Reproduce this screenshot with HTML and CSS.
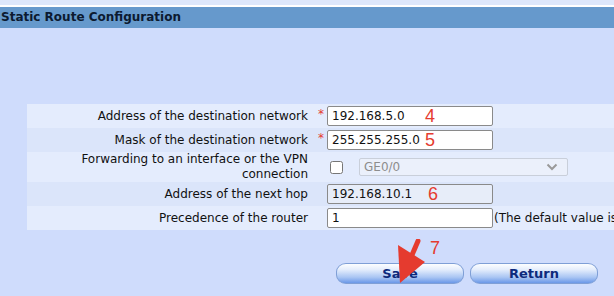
FILE: index.html
```html
<!DOCTYPE html>
<html>
<head>
<meta charset="utf-8">
<link rel="stylesheet" href="styles.css">
</head>
<body>
<div class="top-stripe"></div>
<div class="header">Static Route Configuration</div>
<div class="content">
  <div class="form">
    <div class="row light">
      <div class="label">Address of the destination network</div>
      <div class="star">*</div>
      <div class="value"><input class="field" type="text" value="192.168.5.0"><span class="note note-4">4</span></div>
    </div>
    <div class="row dark">
      <div class="label">Mask of the destination network</div>
      <div class="star">*</div>
      <div class="value"><input class="field" type="text" value="255.255.255.0"><span class="note note-5">5</span></div>
    </div>
    <div class="row light tall">
      <div class="label">Forwarding to an interface or the VPN connection</div>
      <div class="star"></div>
      <div class="value">
        <input class="check" type="checkbox">
        <div class="select-wrap">
          <select class="select" disabled><option>GE0/0</option></select>
          <svg class="chev" width="12" height="8" viewBox="0 0 12 8"><path d="M1.5 1.5 L6 6 L10.5 1.5" fill="none" stroke="#9a9a9a" stroke-width="2"/></svg>
        </div>
      </div>
    </div>
    <div class="row dark">
      <div class="label">Address of the next hop</div>
      <div class="star"></div>
      <div class="value"><input class="field readonly" type="text" value="192.168.10.1" readonly><span class="note note-6">6</span></div>
    </div>
    <div class="row light">
      <div class="label">Precedence of the router</div>
      <div class="star"></div>
      <div class="value"><input class="field" type="text" value="1"><span class="hint">(The default value is 60)</span></div>
    </div>
  </div>
  <div class="buttons">
    <button class="btn">Save</button>
    <button class="btn">Return</button>
    <span class="note note-7">7</span>
    <svg class="arrow" width="40" height="50" viewBox="0 0 40 50"><path d="M28 2 L22 16" stroke="#e53b2f" stroke-width="5" stroke-linecap="round" fill="none"/><path d="M8 6 L35 23 L10 44 Z" fill="#e53b2f"/></svg>
  </div>
</div>
</body>
</html>
```
FILE: styles.css
```css
html, body {
  margin: 0;
  padding: 0;
}
body {
  width: 614px;
  height: 296px;
  overflow: hidden;
  background: #cfdcfc;
  font-family: "DejaVu Sans", Verdana, sans-serif;
  font-size: 12px;
  color: #111;
}
.top-stripe {
  height: 5px;
  background: #dde7fb;
  border-bottom: 2px solid #ffffff;
}
.header {
  height: 21px;
  line-height: 20px;
  background: #6699cc;
  color: #0c1a30;
  font-weight: bold;
  font-size: 12px;
  padding-left: 1px;
  white-space: nowrap;
}
.content {
  padding: 76px 0 0 27px;
}
.form {
  width: 720px;
  display: flex;
  flex-direction: column;
}
.row {
  display: grid;
  grid-template-columns: 285px 15px 1fr;
  align-items: center;
  height: 24px;
}
.row.tall {
  height: 30px;
}
.light { background: #e4ecfd; }
.dark { background: #dbe5fa; }
.label {
  text-align: right;
  padding-right: 4px;
  line-height: 15px;
}
.star {
  color: #e53b2f;
  font-size: 12px;
  text-align: right;
  padding-right: 3px;
  align-self: start;
  padding-top: 3px;
}
.value {
  position: relative;
  display: flex;
  align-items: center;
  height: 100%;
}
.field {
  box-sizing: border-box;
  width: 166px;
  height: 20px;
  border: 1px solid #8a8a8a;
  border-radius: 2px;
  padding: 0 4px;
  font-family: "DejaVu Sans", Verdana, sans-serif;
  font-size: 12px;
  color: #111;
  background: #ffffff;
  margin: 0;
}
.field.readonly {
  background: #e7edf9;
}
.hint {
  white-space: nowrap;
  margin-left: 1px;
}
.check {
  margin: 0 0 0 3px;
  width: 13px;
  height: 13px;
}
.select-wrap {
  position: relative;
  margin-left: 16px;
  width: 209px;
  height: 18px;
}
.select {
  appearance: none;
  -webkit-appearance: none;
  box-sizing: border-box;
  width: 209px;
  height: 18px;
  border: 1px solid #c9cfda;
  border-radius: 2px;
  background: #ebf0fb;
  color: #8d8d8d;
  font-family: "DejaVu Sans", Verdana, sans-serif;
  font-size: 12px;
  padding: 0 4px;
  margin: 0;
  opacity: 1;
}
.chev {
  position: absolute;
  right: 10px;
  top: 5px;
}
.note {
  position: absolute;
  color: #e53b2f;
  font-family: "Liberation Sans", Arial, sans-serif;
  font-size: 18px;
  line-height: 18px;
}
.note-4 { left: 98px; top: 3px; }
.note-5 { left: 98px; top: 3px; }
.note-6 { left: 101px; top: 3px; }
.buttons {
  position: relative;
  display: flex;
  gap: 6px;
  padding: 33px 0 0 309px;
}
.btn {
  box-sizing: border-box;
  width: 128px;
  height: 21px;
  border: 1px solid #7f9fd6;
  border-radius: 10px / 9px;
  background: linear-gradient(#fdfeff 0%, #e4edfc 30%, #a9c5f3 70%, #6b98e8 100%);
  color: #0d2a7c;
  font-family: "DejaVu Sans", Verdana, sans-serif;
  font-weight: bold;
  font-size: 13px;
  padding: 0;
  line-height: 18px;
}
.note-7 { left: 403px; top: 9px; }
.arrow {
  position: absolute;
  left: 363px;
  top: 9px;
}
```
